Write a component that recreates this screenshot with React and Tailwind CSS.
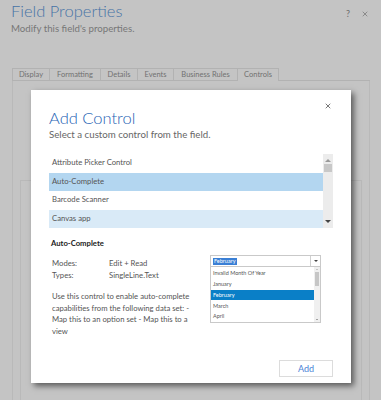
import { X } from 'lucide-react'

const tabs = ['Display', 'Formatting', 'Details', 'Events', 'Business Rules', 'Controls']
const tabWidths = ['w-[38px]', 'w-[51px]', 'w-[37px]', 'w-[36px]', 'w-[64px]', 'w-[41px]']
const controls = [
  { name: 'Attribute Picker Control', bg: '' },
  { name: 'Auto-Complete', bg: 'bg-[#b3d6f0]' },
  { name: 'Barcode Scanner', bg: '' },
  { name: 'Canvas app', bg: 'bg-[#d9eaf7]' },
]
const months = ['Invalid Month Of Year', 'January', 'February', 'March', 'April']

export default function App() {
  return (
    <div className="relative w-[381px] h-[400px] overflow-hidden bg-[#c4c4c4] font-['Lato',sans-serif]">
      {/* Page behind the dialog */}
      <div className="flex flex-col h-full">
        <div className="flex items-start justify-between pl-[11px] pr-[12px] pt-[1px]">
          <div>
            <h1 className="text-[16.5px] leading-[20px] text-[#4673a6] font-light">Field Properties</h1>
            <p className="text-[9.7px] leading-[13px] text-[#777] mt-[1px]">Modify this field's properties.</p>
          </div>
          <div className="flex items-center gap-[11px] pt-[6px] text-[#6d6d6d] text-[9px]">
            <span>?</span>
            <X className="w-[8px] h-[8px]" strokeWidth={2} />
          </div>
        </div>

        <div className="flex mt-[33px] ml-[12px] h-[13px]">
          {tabs.map((t, i) => (
            <div
              key={t}
              className={`${tabWidths[i]} flex items-center justify-center border-t border-r border-[#b2b2b2] text-[7.5px] text-[#717171] ${i === 0 ? 'border-l' : ''} ${i === 5 ? '' : 'border-b'}`}
            >
              {t}
            </div>
          ))}
          <div className="w-[91px] border-b border-[#b2b2b2]" />
        </div>

        <div className="flex-1 ml-[12px] mr-[11px] border-l border-r border-[#b9b9b9] pt-[99px] px-[7px]">
          <div className="h-full border-l border-r border-t border-[#b9b9b9]" />
        </div>
      </div>

      {/* Add Control dialog */}
      <div className="absolute left-[31px] top-[90px] w-[320px] h-[293px] bg-white shadow-[3px_3px_6px_rgba(0,0,0,0.55)] flex flex-col px-[18px] pt-[18px] pb-[6px]">
        <div className="flex items-start justify-between">
          <h2 className="text-[16.5px] leading-[20px] text-[#1e63b4] font-light">Add Control</h2>
          <X className="w-[8px] h-[8px] text-[#333] mr-[1px] mt-[-6px]" strokeWidth={2} />
        </div>
        <p className="text-[9.7px] leading-[13px] text-[#666]">Select a custom control from the field.</p>

        <div className="flex mt-[13px] h-[74px]">
          <div className="flex-1 flex flex-col">
            {controls.map((c) => (
              <div key={c.name} className={`h-[18.5px] flex items-center pl-[3px] text-[7.7px] text-[#555] ${c.bg}`}>
                {c.name}
              </div>
            ))}
          </div>
          <div className="w-[10px] bg-[#ececec] flex flex-col items-center">
            <div className="w-0 h-0 mt-[5px] border-l-[3px] border-r-[3px] border-b-[3px] border-l-transparent border-r-transparent border-b-[#9a9a9a]" />
            <div className="w-[8px] h-[8px] bg-[#c8c8c8] mt-[2px]" />
            <div className="flex-1" />
            <div className="w-0 h-0 mb-[5px] border-l-[3px] border-r-[3px] border-t-[3px] border-l-transparent border-r-transparent border-t-[#444]" />
          </div>
        </div>

        <h3 className="mt-[10px] pl-[2px] text-[7.7px] leading-[10px] font-bold text-[#222]">Auto-Complete</h3>

        <div className="flex mt-[9px]">
          <div className="w-[161px] pl-[3px] text-[7.7px] text-[#555]">
            <div className="flex leading-[12px]">
              <span className="w-[57px]">Modes:</span>
              <span>Edit + Read</span>
            </div>
            <div className="flex leading-[12px]">
              <span className="w-[57px]">Types:</span>
              <span>SingleLine.Text</span>
            </div>
            <p className="mt-[10px] leading-[11.5px] w-[146px]">
              Use this control to enable auto-complete capabilities from the following data set: - Map this to an option set - Map this to a view
            </p>
          </div>

          <div className="w-[111px] mt-[-2px]">
            <div className="h-[12px] border border-[#c9c9c9] flex items-center">
              <div className="flex-1 pl-[2px] flex items-center">
                <span className="bg-[#3a7fd5] text-white text-[5.5px] leading-[7px] px-[1px]">February</span>
              </div>
              <div className="w-[10px] h-full border-l border-[#d0d0d0] flex items-center justify-center">
                <div className="w-0 h-0 border-l-[2px] border-r-[2px] border-t-[2px] border-l-transparent border-r-transparent border-t-[#444]" />
              </div>
            </div>
            <div className="h-[56px] border border-t-0 border-[#c9c9c9] flex">
              <div className="flex-1 flex flex-col pt-[1px]">
                {months.map((m) => (
                  <div
                    key={m}
                    className={`h-[11px] flex items-center pl-[2px] text-[5.5px] ${m === 'February' ? 'bg-[#0a7fc7] text-white' : 'text-[#555]'}`}
                  >
                    {m}
                  </div>
                ))}
              </div>
              <div className="w-[6px] bg-[#f0f0f0] flex flex-col items-center">
                <div className="w-0 h-0 mt-[2px] border-l-[1.5px] border-r-[1.5px] border-b-[1.5px] border-l-transparent border-r-transparent border-b-[#999]" />
                <div className="w-[4px] h-[14px] bg-[#c6c6c6] mt-[2px]" />
                <div className="flex-1" />
                <div className="w-0 h-0 mb-[2px] border-l-[1.5px] border-r-[1.5px] border-t-[1.5px] border-l-transparent border-r-transparent border-t-[#555]" />
              </div>
            </div>
          </div>
        </div>

        <div className="flex-1" />
        <div className="flex justify-end">
          <button className="w-[54px] h-[17px] border border-[#dcdcdc] text-[9px] text-[#4a83d6] flex items-center justify-center">
            Add
          </button>
        </div>
      </div>
    </div>
  )
}
